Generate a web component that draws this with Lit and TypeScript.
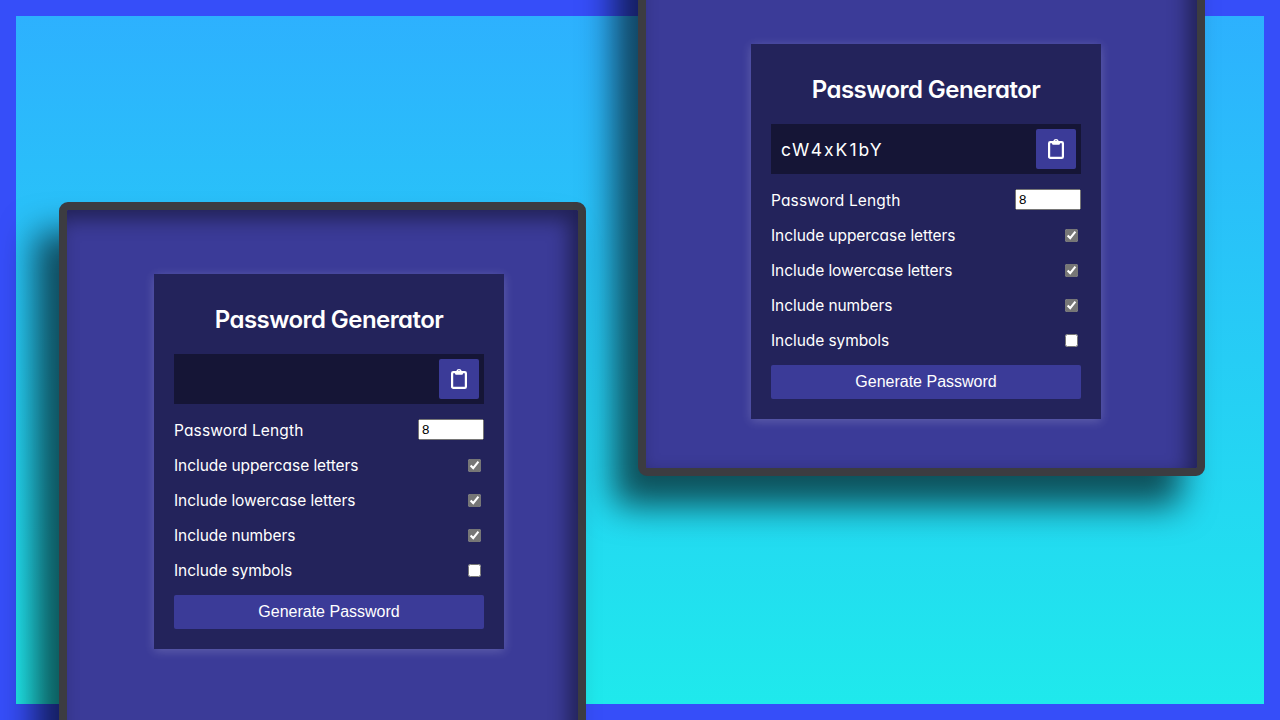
import { LitElement, html, css, nothing } from "lit";
import { customElement, property } from "lit/decorators.js";

const OPTIONS = [
  { label: "Include uppercase letters", cls: "upper", on: true },
  { label: "Include lowercase letters", cls: "lower", on: true },
  { label: "Include numbers", cls: "numbers", on: true },
  { label: "Include symbols", cls: "symbols", on: false },
];

@customElement("password-card")
export class PasswordCard extends LitElement {
  @property() password = "";

  static styles = css`
    :host {
      display: block;
      box-sizing: border-box;
      width: 350px;
      height: 375px;
      padding: 20px;
      background: #23235b;
      box-shadow: 0 2px 10px rgba(255, 255, 255, 0.2);
      color: #fff;
      font-family: Inter, "Noto Sans", sans-serif;
      font-feature-settings: "cv11";
      font-size: 15.5px;
      line-height: 20px;
    }
    h2 {
      box-sizing: border-box;
      height: 30px;
      margin: 10px 0 20px;
      padding-top: 1px;
      font-size: 24px;
      line-height: 30px;
      font-weight: 600;
      letter-spacing: -0.55px;
      text-align: center;
      white-space: nowrap;
    }
    .result {
      box-sizing: border-box;
      display: flex;
      align-items: center;
      justify-content: space-between;
      height: 50px;
      padding: 5px 5px 5px 10px;
      background: rgba(0, 0, 0, 0.4);
      font-size: 17.5px;
      letter-spacing: 2px;
    }
    .value {
      padding-top: 2px;
    }
    .copy {
      display: grid;
      place-items: center;
      box-sizing: border-box;
      width: 40px;
      height: 40px;
      padding: 0;
      border: 0;
      border-radius: 2px;
      background: #3b3b98;
    }
    .row {
      display: flex;
      align-items: center;
      justify-content: space-between;
      height: 20px;
      margin: 15px 0;
    }
    .row span {
      padding-top: 2px;
    }
    .row.length {
      height: 21px;
      letter-spacing: 0.13px;
    }
    .upper,
    .lower {
      letter-spacing: -0.07px;
    }
    .numbers,
    .symbols {
      letter-spacing: -0.07px;
    }
    .length input {
      box-sizing: border-box;
      width: 66px;
      height: 21px;
      margin: 0;
      padding: 1px 2px;
      font-family: "Liberation Sans", sans-serif;
      font-size: 13.333px;
    }
    .row input[type="checkbox"] {
      margin: 3px 3px 3px 4px;
      width: 13px;
      height: 13px;
      accent-color: #767676;
    }
    .generate {
      display: block;
      width: 100%;
      height: 34px;
      padding: 0;
      border: 0;
      border-radius: 2px;
      background: #3b3b98;
      color: #fff;
      font: 16px "Liberation Sans", sans-serif;
    }
  `;

  render() {
    return html`
      <h2><span class="title">Password Generator</span></h2>
      <div class="result">
        <span class="value">${this.password || nothing}</span>
        <button class="copy" aria-label="Copy">
          <svg width="18" height="22" viewBox="0 0 18 22">
            <rect
              x="2.1"
              y="4.1"
              width="13.8"
              height="15.8"
              rx="1.2"
              fill="none"
              stroke="#fff"
              stroke-width="2.2"
            />
            <path
              fill="#fff"
              fill-rule="evenodd"
              d="M5 3H6.3A2.75 2.5 0 0 1 11.7 3H13V5.6Q13 6.8 11.8 6.8H6.2Q5 6.8 5 5.6ZM9 2.3A.9.9 0 1 0 9 4.1A.9.9 0 1 0 9 2.3Z"
            />
          </svg>
        </button>
      </div>
      <div class="row length">
        <span>Password Length</span>
        <input type="number" .value=${"8"} />
      </div>
      ${OPTIONS.map(
        (o) => html`<div class="row">
          <span class=${o.cls}>${o.label}</span>
          <input type="checkbox" .checked=${o.on} />
        </div>`
      )}
      <button class="generate">Generate Password</button>
    `;
  }
}

@customElement("app-root")
export class AppRoot extends LitElement {
  static styles = css`
    :host {
      display: block;
    }
    .stage {
      position: relative;
      box-sizing: border-box;
      width: 1280px;
      height: 720px;
      padding: 16px;
      overflow: hidden;
      background: #364ef9;
    }
    .backdrop {
      height: 100%;
      background: linear-gradient(#2db1fe, #1fe9ec);
    }
    .frame {
      position: absolute;
      box-sizing: border-box;
      display: flex;
      border: 8px solid #3c3c41;
      border-radius: 9px;
      background: #3b3b98;
      box-shadow:
        -24px 30px 34px rgba(0, 0, 0, 0.63),
        inset -9px 9px 20px rgba(0, 0, 0, 0.44);
    }
    .left {
      left: 59px;
      top: 202px;
      width: 527px;
      height: 620px;
      padding: 64px 0 0 87px;
    }
    .right {
      left: 638px;
      top: -110px;
      width: 567px;
      height: 585.6px;
      padding: 146px 0 0 105px;
    }
  `;

  render() {
    return html`
      <div class="stage">
        <div class="backdrop"></div>
        <div class="frame left"><password-card></password-card></div>
        <div class="frame right">
          <password-card password="cW4xK1bY"></password-card>
        </div>
      </div>
    `;
  }
}
